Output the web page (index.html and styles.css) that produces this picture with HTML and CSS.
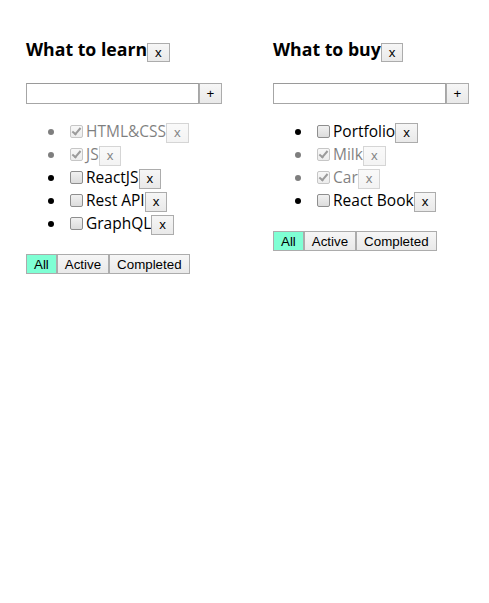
FILE: index.html
```html
<!DOCTYPE html>
<html lang="en">
<head>
<meta charset="utf-8">
<title>Todolists</title>
<link rel="stylesheet" href="styles.css">
</head>
<body>
<div class="app">
  <div class="todolist">
    <h3 class="title">What to learn<button class="btn">x</button></h3>
    <div class="add-row"><input class="add-input" type="text"><button class="btn btn-add">+</button></div>
    <ul class="tasks">
      <li class="task is-done"><input class="check" type="checkbox" checked><span>HTML&amp;CSS</span><button class="btn">x</button></li>
      <li class="task is-done"><input class="check" type="checkbox" checked><span>JS</span><button class="btn">x</button></li>
      <li class="task"><input class="check" type="checkbox"><span>ReactJS</span><button class="btn">x</button></li>
      <li class="task"><input class="check" type="checkbox"><span>Rest API</span><button class="btn">x</button></li>
      <li class="task"><input class="check" type="checkbox"><span>GraphQL</span><button class="btn">x</button></li>
    </ul>
    <div class="filters"><button class="btn active-filter">All</button><button class="btn">Active</button><button class="btn">Completed</button></div>
  </div>
  <div class="todolist">
    <h3 class="title">What to buy<button class="btn">x</button></h3>
    <div class="add-row"><input class="add-input" type="text"><button class="btn btn-add">+</button></div>
    <ul class="tasks">
      <li class="task"><input class="check" type="checkbox"><span>Portfolio</span><button class="btn">x</button></li>
      <li class="task is-done"><input class="check" type="checkbox" checked><span>Milk</span><button class="btn">x</button></li>
      <li class="task is-done"><input class="check" type="checkbox" checked><span>Car</span><button class="btn">x</button></li>
      <li class="task"><input class="check" type="checkbox"><span>React Book</span><button class="btn">x</button></li>
    </ul>
    <div class="filters"><button class="btn active-filter">All</button><button class="btn">Active</button><button class="btn">Completed</button></div>
  </div>
</div>
</body>
</html>
```
FILE: styles.css
```css
html, body {
  background: #ffffff;
}
body {
  margin: 8px;
  font-family: "Open Sans", "Noto Sans", sans-serif;
  font-size: 16px;
  color: #000;
}
.app {
  display: flex;
  padding: 10px 0 0 18px;
}
.todolist {
  flex: 0 0 247px;
  width: 247px;
}
.title {
  margin: 19px 0 0;
  height: 25px;
  font-size: 17.7px;
  line-height: 25px;
  font-weight: 700;
  white-space: nowrap;
}
.btn {
  font-family: "Liberation Sans", Arial, sans-serif;
  font-size: 13.33px;
  font-weight: 400;
  line-height: 15px;
  height: 20px;
  box-sizing: border-box;
  padding: 1px 7px;
  margin: 0;
  border: 1px solid #acacac;
  border-radius: 0;
  background: linear-gradient(#f6f6f6, #e9e9e9);
  color: #000;
}
.title .btn {
  height: 19px;
  vertical-align: -1px;
}
.add-row {
  display: flex;
  margin-top: 21px;
  height: 21px;
}
.add-input {
  width: 173px;
  height: 21px;
  box-sizing: border-box;
  margin: 0;
  padding: 1px 2px;
  border: 1px solid #a6a6a6;
  border-top-color: #9a9a9a;
  background: #fff;
}
.btn-add {
  width: 23px;
  height: 21px;
  padding: 0;
}
.tasks {
  margin: 16px 0 19px;
  padding-left: 40px;
}
.task {
  height: 23px;
  line-height: 23px;
  font-size: 15.5px;
  white-space: nowrap;
}
.task .btn {
  vertical-align: baseline;
}
.is-done {
  opacity: 0.5;
}
.check {
  appearance: none;
  -webkit-appearance: none;
  position: relative;
  width: 13px;
  height: 13px;
  margin: 3px 3px 3px 4px;
  box-sizing: border-box;
  border: 1px solid #8e8e8e;
  border-radius: 2px;
  background: linear-gradient(#f1f1f1, #dcdcdc);
  vertical-align: -4px;
}
.check:checked::after {
  content: "";
  position: absolute;
  left: 3px;
  top: 0px;
  width: 3px;
  height: 7px;
  border: solid #3a3a3a;
  border-width: 0 2px 2px 0;
  transform: rotate(40deg);
}
.filters {
  display: flex;
}
.filters .btn {
  height: 20px;
}
.active-filter {
  background: #7fffd4;
}
```
